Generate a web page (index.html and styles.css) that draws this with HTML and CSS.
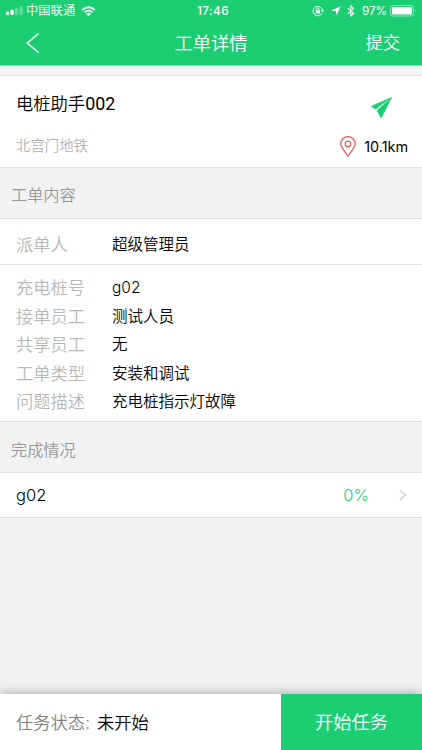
FILE: index.html
```html
<!DOCTYPE html>
<html lang="zh-CN">
<head>
<meta charset="utf-8">
<meta name="viewport" content="width=device-width, initial-scale=1">
<title>工单详情</title>
<link rel="stylesheet" href="styles.css">
</head>
<body>
<div class="app">
  <header class="top">
    <div class="status">
      <div class="status-left">
        <svg class="signal" width="17" height="10" viewBox="0 0 17 10" fill="#fff"><rect x="0" y="5.5" width="3.2" height="3.5" rx="1"/><rect x="4.5" y="3.8" width="3.2" height="5.2" rx="1"/><rect x="9" y="2" width="3.2" height="7" rx="1" opacity=".3"/><rect x="13.5" y="0" width="3.2" height="9" rx="1" opacity=".3"/></svg>
        <span class="carrier">中国联通</span>
        <svg class="wifi" width="15" height="11" viewBox="0 0 16 11.5" fill="none" stroke="#fff" stroke-width="1.9"><path d="M1.2 4.1Q8 -1.7 14.8 4.1M3.7 6.7Q8 3 12.3 6.7"/><path d="M5.4 8.2Q8 6.1 10.6 8.2L8 10.8Z" fill="#fff" stroke="none"/></svg>
      </div>
      <span class="clock">17:46</span>
      <div class="status-right">
        <svg class="lock" width="12" height="12" viewBox="0 0 12 12" fill="none" stroke="#fff"><path d="M9.9 8.4A4.7 4.7 0 1 1 10.4 5.2"/><path d="M8.8 5h3.2l-1.6 2.2Z" fill="#fff" stroke="none"/><rect x="3.8" y="5.2" width="4" height="3.2" fill="#fff" stroke="none"/><path d="M4.6 5.3V4.2a1.2 1.2 0 0 1 2.4 0v1.1" stroke-width=".8"/></svg>
        <svg class="arrow" width="10" height="10" viewBox="0 0 10 10"><path d="M9.6.3 5.5 9.6 5 5 .2 4.5Z" fill="#fff"/></svg>
        <svg class="bluetooth" width="8" height="12" viewBox="0 0 8 12" fill="none" stroke="#fff" stroke-width="1.1"><path d="M.7 3.2 6.7 8.5 3.8 11V.9l2.9 2.5L.7 8.8"/></svg>
        <span class="percent">97%</span>
        <svg width="27" height="12" viewBox="0 0 27 12"><rect x=".5" y=".5" width="23" height="10.5" rx="2" fill="none" stroke="#fff" opacity=".5"/><rect x="2" y="2" width="20" height="7.5" rx=".8" fill="#fff"/><path d="M25 4q1.4 1.7 0 3.4Z" fill="#fff" opacity=".5"/></svg>
      </div>
    </div>
    <nav class="nav">
      <svg width="14" height="22" viewBox="0 0 14 22" fill="none" stroke="#fff" stroke-width="1.5"><path d="M12.5 1.5 1.3 11l11.2 9.5"/></svg>
      <h1>工单详情</h1>
      <span class="submit">提交</span>
    </nav>
  </header>

  <section class="card site">
    <div class="site-row">
      <h2>电桩助手<span class="number">002</span></h2>
      <svg class="plane" width="23" height="23" viewBox="0 0 23 23"><path d="M22.2.8.7 10.2l4.9 3.2ZM22.2.8 6.6 14.4l4.6 8Z" fill="#1bcd73"/></svg>
    </div>
    <div class="site-row">
      <span class="address">北宫门地铁</span>
      <div class="distance">
        <svg width="16" height="21" viewBox="0 0 16 21" fill="none" stroke="#e75b5e" stroke-width="1.3"><path d="M8 20C5.8 16.5.8 12 .8 7.8a7.2 7.2 0 0 1 14.4 0C15.2 12 10.2 16.5 8 20Z"/><circle cx="8" cy="7.9" r="2.7"/></svg>
        <span>10.1km</span>
      </div>
    </div>
  </section>

  <h3 class="section-title">工单内容</h3>
  <section class="card dispatcher">
    <div class="field"><span class="label">派单人</span><span class="value">超级管理员</span></div>
  </section>
  <section class="card details">
    <div class="field"><span class="label">充电桩号</span><span class="value">g02</span></div>
    <div class="field"><span class="label">接单员工</span><span class="value">测试人员</span></div>
    <div class="field"><span class="label">共享员工</span><span class="value">无</span></div>
    <div class="field"><span class="label">工单类型</span><span class="value">安装和调试</span></div>
    <div class="field"><span class="label">问题描述</span><span class="value">充电桩指示灯故障</span></div>
  </section>

  <h3 class="section-title done">完成情况</h3>
  <section class="card progress">
    <span class="pile">g02</span>
    <span class="rate">0%</span>
    <svg width="8" height="12" viewBox="0 0 8 12" fill="none" stroke="#c8c8cc" stroke-width="1.1"><path d="m.8 1.2 5.7 4.8L.8 10.8"/></svg>
  </section>

  <footer class="bottom">
    <div class="state"><span>任务状态:</span><strong>未开始</strong></div>
    <div class="start">开始任务</div>
  </footer>
</div>
</body>
</html>
```
FILE: styles.css
```css
* { box-sizing: border-box; }
body {
  margin: 0;
  font-family: Inter, "Noto Sans CJK SC", sans-serif;
  font-weight: 350;
  color: #000;
}
h1, h2, h3 { margin: 0; font-weight: 350; }
svg { display: block; flex: none; }
.app {
  display: flex;
  flex-direction: column;
  width: 422px;
  height: 750px;
  overflow: hidden;
  background: #f2f2f2;
  white-space: nowrap;
}
.top {
  height: 66px;
  flex: none;
  background: #1bcd73;
  border-bottom: 1px solid #7bdba8;
  color: #fff;
}
.status {
  display: grid;
  grid-template-columns: 1fr auto 1fr;
  align-items: center;
  height: 22px;
  padding: 0 5px 0 6px;
}
.status-left, .status-right { display: flex; align-items: center; }
.status-right { justify-content: flex-end; }
.carrier { margin-left: 3px; font-size: 12.3px; line-height: 20px; }
.wifi { margin-left: 6px; }
.clock { padding-left: 3px; font-size: 11.8px; font-weight: 550; letter-spacing: .4px; }
.lock { margin-right: -1px; }
.arrow { margin-left: 8px; }
.bluetooth { margin-left: 6px; }
.percent { margin: 0 3px 0 7px; font-size: 11.7px; font-weight: 400; }
.nav {
  display: grid;
  grid-template-columns: 1fr auto 1fr;
  align-items: center;
  height: 42px;
  padding: 0 22px 0 26px;
}
.nav h1 { margin-left: -4px; font-size: 18.3px; line-height: 42px; }
.submit { justify-self: end; font-size: 17.3px; line-height: 42px; }
.card {
  flex: none;
  background: #fff;
  border-bottom: 1px solid #dfdfe1;
}
.site {
  height: 93px;
  margin-top: 9px;
  padding: 7px 14px 0 16px;
  border-top: 1px solid #dfdfe1;
}
.site-row {
  display: flex;
  align-items: center;
  justify-content: space-between;
  height: 41px;
}
.site h2 { font-family: "Noto Sans CJK SC", sans-serif; font-size: 17.3px; line-height: 26px; }
.number { font-family: Roboto, sans-serif; font-size: 17.8px; font-weight: 400; }
.plane { margin: 8px 15px 0 0; }
.address { font-size: 14.4px; color: #b4b4b4; }
.distance { display: flex; align-items: center; gap: 8px; margin-top: 4px; font-size: 14.4px; font-weight: 400; }
.section-title {
  flex: none;
  height: 51px;
  padding-left: 11px;
  border-bottom: 1px solid #dfdfe1;
  font-size: 16.2px;
  line-height: 55px;
  color: #999;
}
.field { display: grid; grid-template-columns: 96px 1fr; align-items: center; padding-left: 16px; }
.label { font-size: 17.3px; color: #b8b8b8; }
.value { font-size: 15.5px; }
.dispatcher .field { height: 45px; line-height: 28px; padding-top: 6px; }
.details { height: 157px; padding-top: 9px; }
.details .field { height: 28.6px; line-height: 28.6px; }
.section-title.done { line-height: 57px; }
.progress {
  display: flex;
  align-items: center;
  height: 45px;
  padding: 0 15px 0 16px;
  font-size: 16.5px;
}
.rate { margin-left: auto; margin-right: 30px; color: #1bcd73; }
.bottom {
  display: flex;
  height: 56px;
  margin-top: auto;
  box-shadow: 0 0 12px rgba(0, 0, 0, .35);
  font-size: 17.3px;
  line-height: 57px;
}
.state { width: 281px; padding-left: 16px; background: #fff; }
.state span { color: #808080; }
.state strong { margin-left: 7px; font-weight: 350; }
.start { flex: 1; background: #1bcd73; color: #fff; font-size: 18.3px; text-align: center; }
```
